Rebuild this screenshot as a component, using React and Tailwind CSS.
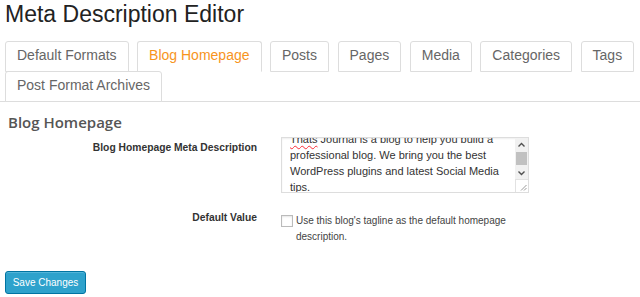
const tabs = [
  "Default Formats",
  "Blog Homepage",
  "Posts",
  "Pages",
  "Media",
  "Categories",
  "Tags",
  "Post Format Archives",
];

const active = "Blog Homepage";

function FakeTextarea() {
  return (
    <div className="relative flex h-[56px] w-[248px] overflow-hidden border border-[#ddd] bg-white shadow-[inset_0_1px_2px_rgba(0,0,0,0.07)]">
      <div className="flex-1 overflow-hidden pl-[8px]">
        <div className="-mt-[7px] text-[11px] leading-[16px] text-[#333] whitespace-nowrap">
          <div>
            <span className="underline decoration-wavy decoration-red-500 decoration-1 underline-offset-2">
              Thats
            </span>{" "}
            Journal is a blog to help you build a
          </div>
          <div>professional blog. We bring you the best</div>
          <div>WordPress plugins and latest Social Media</div>
          <div>tips.</div>
        </div>
      </div>

      {/* scrollbar */}
      <div className="flex w-[13px] flex-col bg-[#f1f1f1]">
        <div className="flex h-[12px] items-center justify-center">
          <svg width="7" height="5" viewBox="0 0 7 5">
            <path d="M0.5 4.5 L3.5 1.5 L6.5 4.5" fill="none" stroke="#505050" strokeWidth="1.4" />
          </svg>
        </div>
        <div className="mx-[1px] mt-[2px] h-[13px] bg-[#c1c1c1]" />
        <div className="flex-1" />
        <div className="flex h-[12px] items-center justify-center">
          <svg width="7" height="5" viewBox="0 0 7 5">
            <path d="M0.5 0.5 L3.5 3.5 L6.5 0.5" fill="none" stroke="#505050" strokeWidth="1.4" />
          </svg>
        </div>
        <div className="relative h-[13px] border-l border-t border-[#e2e2e2] bg-white">
          <svg className="absolute bottom-[1px] right-[1px]" width="7" height="7" viewBox="0 0 7 7">
            <path d="M6.5 1 L1 6.5 M6.5 4 L4 6.5" stroke="#9a9a9a" strokeWidth="1" />
          </svg>
        </div>
      </div>
    </div>
  );
}

export default function App() {
  return (
    <div className="h-[297px] w-[640px] overflow-hidden bg-white font-['Liberation_Sans',Arial,sans-serif]">
      <h1 className="px-[5px] text-[23px] leading-[29px] text-[#222]">
        Meta Description Editor
      </h1>

      <div className="mt-[12px] flex flex-wrap gap-x-[8.5px] border-b border-[#ddd] pl-[5px]">
        {tabs.map((t) => (
          <div
            key={t}
            className={`-mb-px rounded-t-[3px] border bg-white px-[11px] pt-[4px] pb-[6px] text-[14px] leading-[19px] ${
              t === active
                ? "border-[#ddd] border-b-transparent text-[#f7941d]"
                : "border-[#ddd] text-[#666]"
            }`}
          >
            {t}
          </div>
        ))}
      </div>

      <div className="pl-[8px]">
        <h3 className="mt-[10px] font-['Open_Sans',sans-serif] text-[15px] font-semibold leading-[20px] text-[#555]">
          Blog Homepage
        </h3>

        {/* Meta description row */}
        <div className="mt-[5px] flex items-start">
          <div className="w-[249px] pt-[4px] text-right text-[10.3px] font-bold leading-[14px] text-[#333]">
            Blog Homepage Meta Description
          </div>
          <div className="ml-[24px]">
            <FakeTextarea />
          </div>
        </div>

        {/* Default value row */}
        <div className="mt-[18px] flex items-start">
          <div className="w-[249px] text-right text-[10.3px] font-bold leading-[14px] text-[#333]">
            Default Value
          </div>
          <div className="ml-[24px] flex items-start">
            <div className="mt-[4px] h-[12px] w-[12px] border border-[#bbb] bg-white shadow-[inset_0_1px_2px_rgba(0,0,0,0.1)]" />
            <p className="ml-[3px] mt-[2px] w-[233px] text-[10px] leading-[16px] text-[#444]">
              Use this blog's tagline as the default homepage description.
            </p>
          </div>
        </div>
      </div>

      <div className="mt-[24px] pl-[5px]">
        <button className="h-[23px] w-[81px] rounded-[3px] border border-[#0074a2] bg-[#2ea2cc] text-[10px] text-white shadow-[inset_0_1px_0_rgba(120,200,230,0.5)]">
          Save Changes
        </button>
      </div>
    </div>
  );
}
